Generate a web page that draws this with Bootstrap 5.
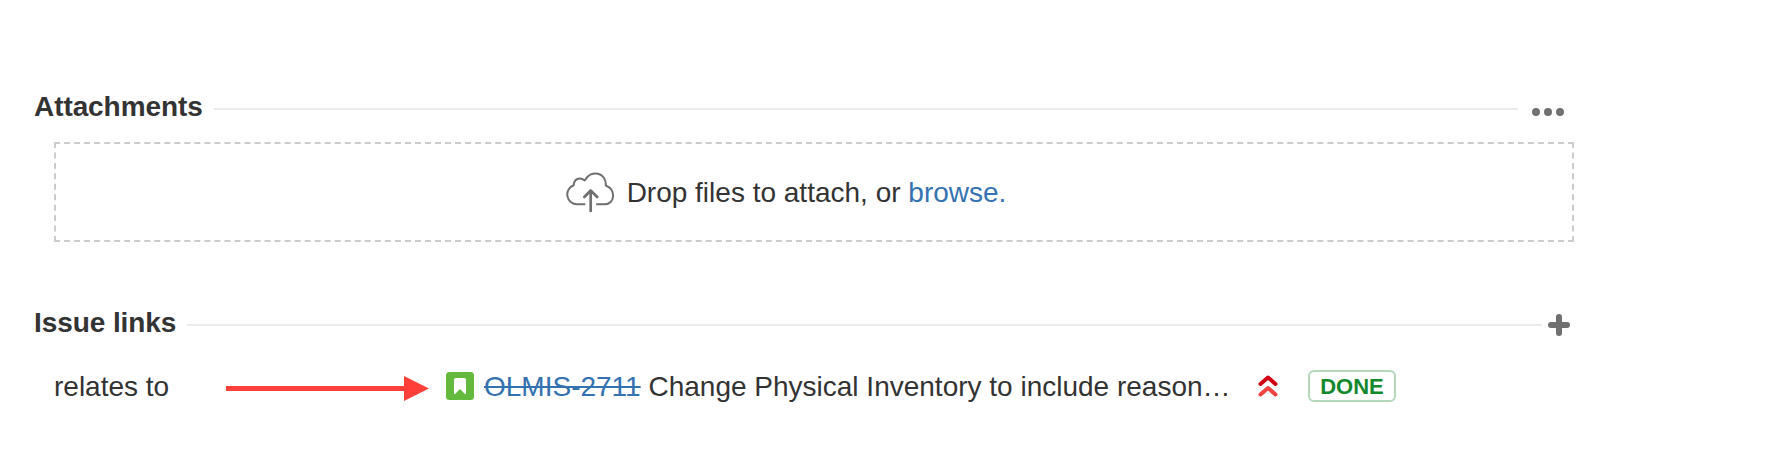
<!DOCTYPE html>
<html lang="en">
<head>
<meta charset="utf-8">
<meta name="viewport" content="width=device-width, initial-scale=1">
<title>Issue details</title>
<link rel="stylesheet" href="https://cdn.jsdelivr.net/npm/bootstrap@5.3.0/dist/css/bootstrap.min.css">
<style>
body{font:28px/40px "Liberation Sans",Arial,sans-serif;color:#333;background:#fff}
.issue{width:1540px;margin-left:34px;padding-top:86px}
.module-title{font-size:28px;line-height:40px;font-weight:700;color:#333;letter-spacing:-.08px;padding-top:2px}
.module-head{height:40px}
.rule{height:2px;background:#ebebeb;margin-top:6px}
.rule-files{margin-left:11px;margin-right:14px}
.rule-links{margin-left:11px;margin-right:6px}
.more{width:32px;height:8px;margin:12px 10px 0 0}
.plus{width:22px;height:22px;margin:6px 4px 0 0}
.dropzone{height:100px;margin:16px 0 0 20px;border:2px dashed #ccc;padding-right:56px}
.dropzone a,.issue-key{color:#3572b0}
.dropzone svg{margin:2px 12px 0 0}
.drop-text{padding-top:1px}
.issue-links{margin-top:60px}
.link-row{margin:24px 0 0 20px;height:40px}
.relation{width:172px;padding-top:2px}
.arrow{margin-top:5px}
.story{margin:0 10px 0 17px}
.summary{width:749px;padding-top:2px}
.priority{margin:-1px 0 0 25px}
.status{width:88px;height:32px;margin-left:30px;border:2px solid #b2d8b9;border-radius:6px;color:#14892c;font-size:22px;line-height:29px;font-weight:700}
</style>
</head>
<body>
<main class="issue">
  <section>
    <header class="module-head d-flex align-items-center">
      <h2 class="module-title mb-0">Attachments</h2>
      <div class="rule rule-files flex-grow-1"></div>
      <svg class="more flex-shrink-0" viewBox="0 0 32 8" fill="#707070"><circle cx="4" cy="4" r="4"/><circle cx="16" cy="4" r="4"/><circle cx="28" cy="4" r="4"/></svg>
    </header>
    <div class="dropzone d-flex align-items-center justify-content-center">
      <svg width="49" height="42" viewBox="0 0 49 42" fill="none" stroke="#707070" stroke-width="2" stroke-linecap="round" stroke-linejoin="round"><path d="M18.500 32.300H11A9.800 9.800 0 0 1 7.700 13.300C8 7 13.500 4.500 18.700 8.500C25-3.500 41 1 39.700 13.500C50.500 17.500 49 32.300 38.500 32.300H31"/><path d="M24.700 39V18.500M18.300 25L24.700 18.500L31.200 25" stroke-width="2.700"/></svg>
      <span class="drop-text">Drop files to attach, or <a href="#" class="text-decoration-none">browse.</a></span>
    </div>
  </section>
  <section class="issue-links">
    <header class="module-head d-flex align-items-center">
      <h2 class="module-title mb-0">Issue links</h2>
      <div class="rule rule-links flex-grow-1"></div>
      <svg class="plus flex-shrink-0" viewBox="0 0 22 22" stroke="#707070" stroke-width="6" stroke-linecap="round"><path d="M11 3V19M3 11H19"/></svg>
    </header>
    <div class="link-row d-flex align-items-center">
      <span class="relation flex-shrink-0">relates to</span>
      <svg class="arrow flex-shrink-0" width="203" height="25" viewBox="0 0 203 25" fill="#ff3f3a"><path d="M0 10H178V0L203 12.500L178 25V15H0Z"/></svg>
      <svg class="story flex-shrink-0" width="28" height="28" viewBox="0 0 28 28"><rect width="28" height="28" rx="3.500" fill="#63ba3c"/><path d="M9.500 6H18.500Q20 6 20 7.500V22H19L14 17L9 22H8V7.500Q8 6 9.500 6Z" fill="#fff"/></svg>
      <div class="summary text-nowrap flex-shrink-0"><a href="#" class="issue-key text-decoration-line-through">OLMIS-2711</a> Change Physical Inventory to include reason…</div>
      <svg class="priority flex-shrink-0" width="20" height="22" viewBox="0 0 20 22" fill="none" stroke-width="4" stroke-linecap="round" stroke-linejoin="round"><path d="M2.500 9L10 2.500L17.500 9" stroke="#ce0814"/><path d="M2.500 19.500L10 13L17.500 19.500" stroke="#ee4444"/></svg>
      <span class="status text-center flex-shrink-0">DONE</span>
    </div>
  </section>
</main>
<script src="https://cdn.jsdelivr.net/npm/bootstrap@5.3.0/dist/js/bootstrap.bundle.min.js"></script>
</body>
</html>
